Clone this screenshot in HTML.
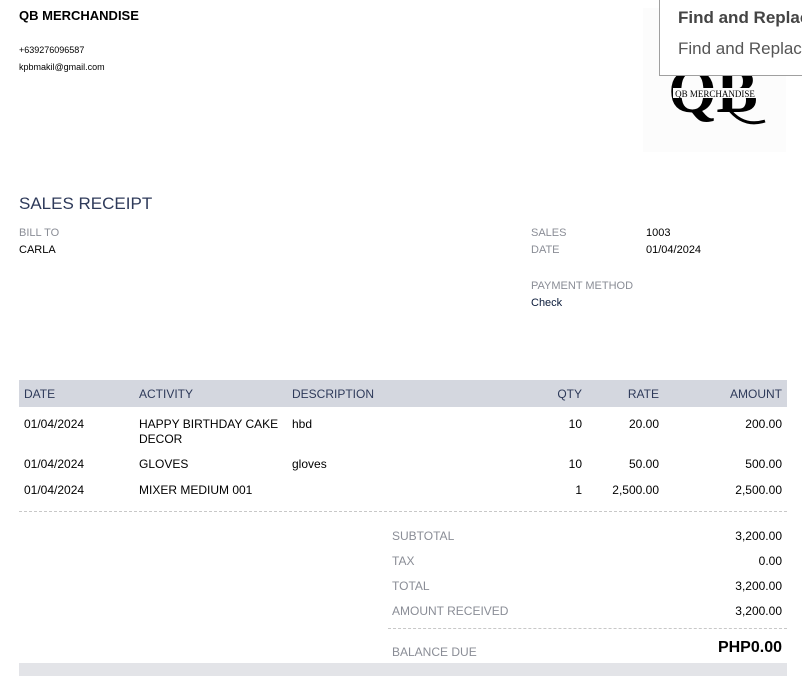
<!DOCTYPE html>
<html><head><meta charset="utf-8">
<style>
*{margin:0;padding:0;box-sizing:border-box}
body{width:802px;height:676px;overflow:hidden;background:#fff;font-family:"Liberation Sans",Arial,sans-serif;position:relative;color:#000}
.a{position:absolute;white-space:nowrap}
.g{color:#8a8d96;font-size:12px}
.t{font-size:12px}
.h{color:#2e3a5a;font-size:12px}
.r{text-align:right}
.dash{position:absolute;height:0;border-top:1px dashed #c8c8c8}
</style></head><body>
<div class="a" style="left:19px;top:8px;font-size:13px;font-weight:bold">QB MERCHANDISE</div>
<div class="a" style="left:19px;top:45px;font-size:9px">+639276096587</div>
<div class="a" style="left:19px;top:62px;font-size:9px">kpbmakil@gmail.com</div>

<div class="a" style="left:643px;top:8px;width:143px;height:144px;background:#fcfcfc"></div>
<svg class="a" style="left:643px;top:8px" width="143" height="144" viewBox="0 0 143 144">
<text x="70" y="104" font-family="Liberation Serif,serif" font-size="62" font-weight="bold" text-anchor="middle" fill="#000">QB</text>
<rect x="30" y="80" width="84" height="10" fill="#fcfcfc"/>
<text x="72" y="89" font-family="Liberation Serif,serif" font-size="9" text-anchor="middle" fill="#000">QB MERCHANDISE</text>
<path d="M85 100 Q100 120 122 113" stroke="#000" stroke-width="3" fill="none"/>
</svg>
<div class="a" style="left:659px;top:-1px;width:150px;height:77px;background:#fff;border:1px solid #a0a0a0"></div>
<div class="a" style="left:678px;top:8px;font-size:17px;font-weight:bold;color:#444">Find and Replace</div>
<div class="a" style="left:678px;top:39px;font-size:17px;color:#555">Find and Replace</div>

<div class="a" style="left:19px;top:194px;font-size:17px;color:#2e3a5a">SALES RECEIPT</div>
<div class="a g" style="left:19px;top:227px;font-size:11px">BILL TO</div>
<div class="a t" style="left:19px;top:244px;font-size:11px">CARLA</div>
<div class="a g" style="left:531px;top:227px;font-size:11px">SALES</div>
<div class="a t" style="left:646px;top:227px;font-size:11px">1003</div>
<div class="a g" style="left:531px;top:244px;font-size:11px">DATE</div>
<div class="a t" style="left:646px;top:244px;font-size:11px">01/04/2024</div>
<div class="a g" style="left:531px;top:280px;font-size:11px">PAYMENT METHOD</div>
<div class="a t" style="left:531px;top:297px;font-size:11px;color:#0a1a3a">Check</div>

<div class="a" style="left:19px;top:380px;width:768px;height:27px;background:#d4d7df"></div>
<div class="a h" style="left:24px;top:387px">DATE</div>
<div class="a h" style="left:139px;top:387px">ACTIVITY</div>
<div class="a h" style="left:292px;top:387px">DESCRIPTION</div>
<div class="a h r" style="right:220px;top:387px">QTY</div>
<div class="a h r" style="right:143px;top:387px">RATE</div>
<div class="a h r" style="right:20px;top:387px">AMOUNT</div>

<div class="a t" style="left:24px;top:417px">01/04/2024</div>
<div class="a t" style="left:139px;top:417px;line-height:15px">HAPPY BIRTHDAY CAKE<br>DECOR</div>
<div class="a t" style="left:292px;top:417px">hbd</div>
<div class="a t" style="right:220px;top:417px">10</div>
<div class="a t" style="right:143px;top:417px">20.00</div>
<div class="a t" style="right:20px;top:417px">200.00</div>

<div class="a t" style="left:24px;top:457px">01/04/2024</div>
<div class="a t" style="left:139px;top:457px">GLOVES</div>
<div class="a t" style="left:292px;top:457px">gloves</div>
<div class="a t" style="right:220px;top:457px">10</div>
<div class="a t" style="right:143px;top:457px">50.00</div>
<div class="a t" style="right:20px;top:457px">500.00</div>

<div class="a t" style="left:24px;top:483px">01/04/2024</div>
<div class="a t" style="left:139px;top:483px">MIXER MEDIUM 001</div>
<div class="a t" style="right:220px;top:483px">1</div>
<div class="a t" style="right:143px;top:483px">2,500.00</div>
<div class="a t" style="right:20px;top:483px">2,500.00</div>

<div class="dash" style="left:19px;width:768px;top:511px"></div>

<div class="a g" style="left:392px;top:529px">SUBTOTAL</div>
<div class="a t" style="right:20px;top:529px">3,200.00</div>
<div class="a g" style="left:392px;top:554px">TAX</div>
<div class="a t" style="right:20px;top:554px">0.00</div>
<div class="a g" style="left:392px;top:579px">TOTAL</div>
<div class="a t" style="right:20px;top:579px">3,200.00</div>
<div class="a g" style="left:392px;top:604px">AMOUNT RECEIVED</div>
<div class="a t" style="right:20px;top:604px">3,200.00</div>
<div class="dash" style="left:388px;width:399px;top:628px"></div>
<div class="a g" style="left:392px;top:645px">BALANCE DUE</div>
<div class="a" style="right:20px;top:639px;font-size:16px;font-weight:bold">PHP0.00</div>

<div class="a" style="left:19px;top:663px;width:768px;height:13px;background:#e3e4e8"></div>
</body></html>
